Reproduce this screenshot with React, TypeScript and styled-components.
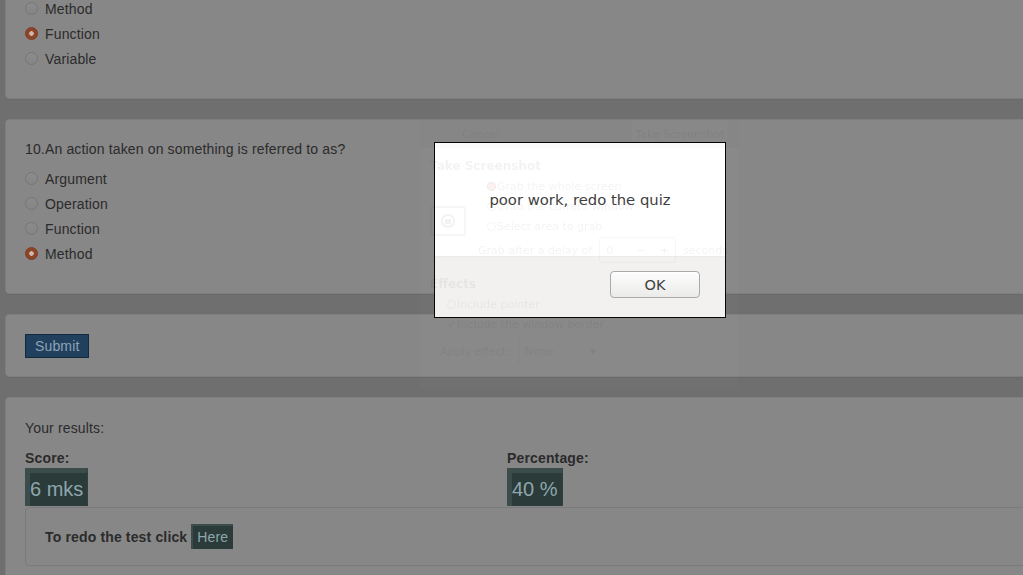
import React from "react";
import styled, { createGlobalStyle } from "styled-components";

const Global = createGlobalStyle`
  html, body {
    margin: 0;
    padding: 0;
    background: #6f6f6f;
    overflow: hidden;
  }
  body {
    font-family: "Liberation Sans", Arial, sans-serif;
    font-size: 14px;
    letter-spacing: 0.15px;
    color: #2b2b2b;
  }
  * { box-sizing: border-box; }
`;

const Page = styled.main`
  width: 1060px;
  margin-top: -51px;
  padding-left: 5px;
  display: flex;
  flex-direction: column;
  gap: 20px;
`;

const Panel = styled.section<{ $pt?: number; $pb?: number }>`
  background: #878787;
  border: 1px solid #7e7e7e;
  border-radius: 4px;
  box-shadow: 0 1px 1px rgba(0, 0, 0, 0.05);
  padding: ${(p) => p.$pt ?? 19}px 19px ${(p) => p.$pb ?? 27}px 19px;
  display: flex;
  flex-direction: column;
`;

const Question = styled.div`
  line-height: 20px;
  margin-bottom: 7px;
`;

const OptionRow = styled.label`
  display: flex;
  align-items: center;
  gap: 7px;
  height: 25px;
  line-height: 20px;
`;

const Radio = styled.span<{ $checked?: boolean }>`
  width: 13px;
  height: 13px;
  border-radius: 50%;
  flex: none;
  border: 1px solid ${(p) => (p.$checked ? "#7a3a20" : "#767676")};
  background: ${(p) =>
    p.$checked
      ? "radial-gradient(circle, #cdb8ae 0 2px, #8d4529 2.5px)"
      : "linear-gradient(#8b8b8b, #858585)"};
`;

const SubmitButton = styled.button`
  align-self: flex-start;
  height: 24px;
  padding: 0 9px;
  background: #21405e;
  border: 1px solid #14293d;
  color: #8ea3b5;
  font-family: "Liberation Sans", Arial, sans-serif;
  font-size: 14px;
  letter-spacing: 0.15px;
  line-height: 22px;
  border-radius: 0;
`;

const Line = styled.div<{ $bold?: boolean }>`
  line-height: 20px;
  font-weight: ${(p) => (p.$bold ? 700 : 400)};
`;

const ResultsGrid = styled.div`
  display: grid;
  grid-template-columns: 482px 1fr;
  margin-top: 10px;
`;

const ResultCol = styled.div`
  display: flex;
  flex-direction: column;
  align-items: flex-start;
`;

const ValueBox = styled.span`
  display: inline-block;
  height: 38px;
  background: #2b3b39;
  border-top: 5px solid #3b4c4a;
  border-left: 5px solid #3b4c4a;
  border-right: 1px solid #2f403e;
  color: #8ea6ad;
  font-size: 20px;
  letter-spacing: 0;
  line-height: 33px;
  padding: 0 4px 0 0;
`;

const RedoBox = styled.div`
  margin-top: 1px;
  border: 1px solid #7a7a7a;
  border-radius: 4px;
  padding: 16px 19px 16px 19px;
  display: flex;
  align-items: center;
  gap: 4px;
  font-weight: 700;
  height: 59px;
`;

const HereButton = styled.span`
  display: inline-block;
  height: 25px;
  background: #2b3b39;
  border-top: 2px solid #3b4c4a;
  border-left: 2px solid #3b4c4a;
  color: #8ea6ad;
  font-weight: 400;
  font-size: 14px;
  line-height: 22px;
  padding: 0 5px 0 4px;
`;

/* Alert dialog */
const Dialog = styled.div`
  position: fixed;
  left: 434px;
  top: 142px;
  width: 292px;
  height: 176px;
  border: 1px solid #000;
  background: #fff;
  display: flex;
  flex-direction: column;
  font-family: "DejaVu Sans", "Noto Sans", sans-serif;
  letter-spacing: 0;
`;

const DialogMessage = styled.div`
  height: 113px;
  display: flex;
  align-items: center;
  justify-content: center;
  font-size: 14.8px;
  color: #3c3c3c;
`;

const DialogFooter = styled.div`
  flex: 1;
  background: #f2f1f0;
  border-top: 1px solid #ecebea;
  display: flex;
  justify-content: flex-end;
  align-items: flex-start;
  padding: 14px 25px 0 0;
`;

const OkButton = styled.button`
  width: 90px;
  height: 27px;
  border: 1px solid #a9a9a9;
  border-radius: 4px;
  background: linear-gradient(#fdfdfd, #ebebea);
  box-shadow: inset 0 1px 0 #fff;
  font-family: "DejaVu Sans", "Noto Sans", sans-serif;
  font-size: 14.5px;
  color: #3c3c3c;
  padding: 0;
`;

/* faint afterimage of a screenshot tool window */
const Ghost = styled.div`
  position: fixed;
  left: 420px;
  top: 120px;
  width: 318px;
  height: 268px;
  pointer-events: none;
  background: rgba(255, 255, 255, 0.02);
  font-family: "DejaVu Sans", "Noto Sans", sans-serif;
  font-size: 11px;
  letter-spacing: 0;
  white-space: nowrap;
  color: rgba(0, 0, 0, 0.05);
  display: flex;
  flex-direction: column;
`;

const GhostHeader = styled.div`
  height: 28px;
  display: flex;
  align-items: center;
  justify-content: space-between;
  background: rgba(0, 0, 0, 0.015);
  padding-left: 42px;
`;

const GhostHeaderButton = styled.span`
  height: 22px;
  width: 96px;
  margin-right: 10px;
  align-self: flex-start;
  display: flex;
  align-items: center;
  justify-content: center;
  padding-top: 6px;
  background: rgba(255, 255, 255, 0.015);
`;

const GhostBody = styled.div`
  padding: 8px 10px 0 10px;
  display: flex;
  flex-direction: column;
`;

const GhostTitle = styled.div`
  font-weight: 700;
  font-size: 12px;
  line-height: 20px;
`;

const GhostRow = styled.div`
  display: flex;
  align-items: flex-end;
`;

const GhostIcon = styled.div`
  width: 36px;
  height: 30px;
  border: 2px solid rgba(0, 0, 0, 0.035);
  border-radius: 3px;
  display: flex;
  align-items: center;
  justify-content: center;
`;

const GhostOptions = styled.div`
  margin-left: 21px;
  display: flex;
  flex-direction: column;
`;

const GhostOption = styled.div<{ $indent?: number }>`
  height: 20px;
  display: flex;
  align-items: center;
  gap: 1px;
  padding-left: ${(p) => p.$indent ?? 0}px;
`;

const GhostDot = styled.span<{ $on?: boolean }>`
  width: 9px;
  height: 9px;
  border-radius: 50%;
  border: 1px solid rgba(0, 0, 0, 0.035);
  background: ${(p) => (p.$on ? "rgba(200,60,20,0.07)" : "transparent")};
`;

const GhostDelay = styled.div`
  height: 26px;
  margin-top: 1px;
  padding-left: 48px;
  display: flex;
  align-items: center;
  gap: 7px;
`;

const GhostSpin = styled.span`
  width: 84px;
  height: 26px;
  border: 1px solid rgba(0, 0, 0, 0.03);
  border-radius: 3px;
  display: flex;
  align-items: center;
  justify-content: space-between;
  padding: 0 6px;
`;

const GhostSection = styled.div`
  font-weight: 700;
  font-size: 12px;
  line-height: 20px;
  margin-top: 11px;
`;

const GhostApply = styled.div`
  height: 26px;
  margin-top: 4px;
  padding-left: 10px;
  display: flex;
  align-items: center;
  gap: 8px;
`;

const GhostCombo = styled.span`
  width: 82px;
  height: 26px;
  border-left: 1px solid rgba(0, 0, 0, 0.03);
  display: flex;
  align-items: center;
  justify-content: space-between;
  padding: 0 4px 0 6px;
`;

type Opt = { label: string; checked?: boolean };

const QuestionPanel = ({ q, options }: { q: string; options: Opt[] }) => (
  <Panel>
    <Question>{q}</Question>
    {options.map((o) => (
      <OptionRow key={o.label}>
        <Radio $checked={o.checked} />
        {o.label}
      </OptionRow>
    ))}
  </Panel>
);

export default function App() {
  return (
    <>
      <Global />
      <Page>
        <QuestionPanel
          q="9.A named block of code that performs a task is called?"
          options={[
            { label: "Method" },
            { label: "Function", checked: true },
            { label: "Variable" },
          ]}
        />
        <QuestionPanel
          q="10.An action taken on something is referred to as?"
          options={[
            { label: "Argument" },
            { label: "Operation" },
            { label: "Function" },
            { label: "Method", checked: true },
          ]}
        />
        <Panel $pt={19} $pb={18}>
          <SubmitButton>Submit</SubmitButton>
        </Panel>
        <Panel $pt={20} $pb={20}>
          <Line>Your results:</Line>
          <ResultsGrid>
            <ResultCol>
              <Line $bold>Score:</Line>
              <ValueBox>6 mks</ValueBox>
            </ResultCol>
            <ResultCol>
              <Line $bold>Percentage:</Line>
              <ValueBox>40 %</ValueBox>
            </ResultCol>
          </ResultsGrid>
          <RedoBox>
            To redo the test click <HereButton>Here</HereButton>
          </RedoBox>
        </Panel>
      </Page>

      <Dialog role="alertdialog">
        <DialogMessage>poor work, redo the quiz</DialogMessage>
        <DialogFooter>
          <OkButton>OK</OkButton>
        </DialogFooter>
      </Dialog>

      <Ghost aria-hidden>
        <GhostHeader>
          <span>Cancel</span>
          <GhostHeaderButton>Take Screenshot</GhostHeaderButton>
        </GhostHeader>
        <GhostBody>
          <GhostTitle>Take Screenshot</GhostTitle>
          <GhostRow>
            <GhostIcon>
              <svg width="18" height="16" viewBox="0 0 18 16">
                <circle cx="9" cy="8" r="6" fill="none" stroke="rgba(0,0,0,0.05)" strokeWidth="2" />
                <rect x="6" y="6" width="6" height="5" fill="rgba(0,0,0,0.05)" />
              </svg>
            </GhostIcon>
            <GhostOptions>
              <GhostOption>
                <GhostDot $on />
                Grab the whole screen
              </GhostOption>
              <GhostOption>
                <GhostDot />
                Grab the current window
              </GhostOption>
              <GhostOption>
                <GhostDot />
                Select area to grab
              </GhostOption>
            </GhostOptions>
          </GhostRow>
          <GhostDelay>
            Grab after a delay of
            <GhostSpin>
              <span>0</span>
              <span>−&nbsp;&nbsp;&nbsp;&nbsp;+</span>
            </GhostSpin>
            seconds
          </GhostDelay>
          <GhostSection>Effects</GhostSection>
          <GhostOption $indent={17}>
            <GhostDot />
            Include pointer
          </GhostOption>
          <GhostOption $indent={17}>
            <span>✓</span>
            Include the window border
          </GhostOption>
          <GhostApply>
            Apply effect:
            <GhostCombo>
              <span>None</span>
              <span>▾</span>
            </GhostCombo>
          </GhostApply>
        </GhostBody>
      </Ghost>
    </>
  );
}
